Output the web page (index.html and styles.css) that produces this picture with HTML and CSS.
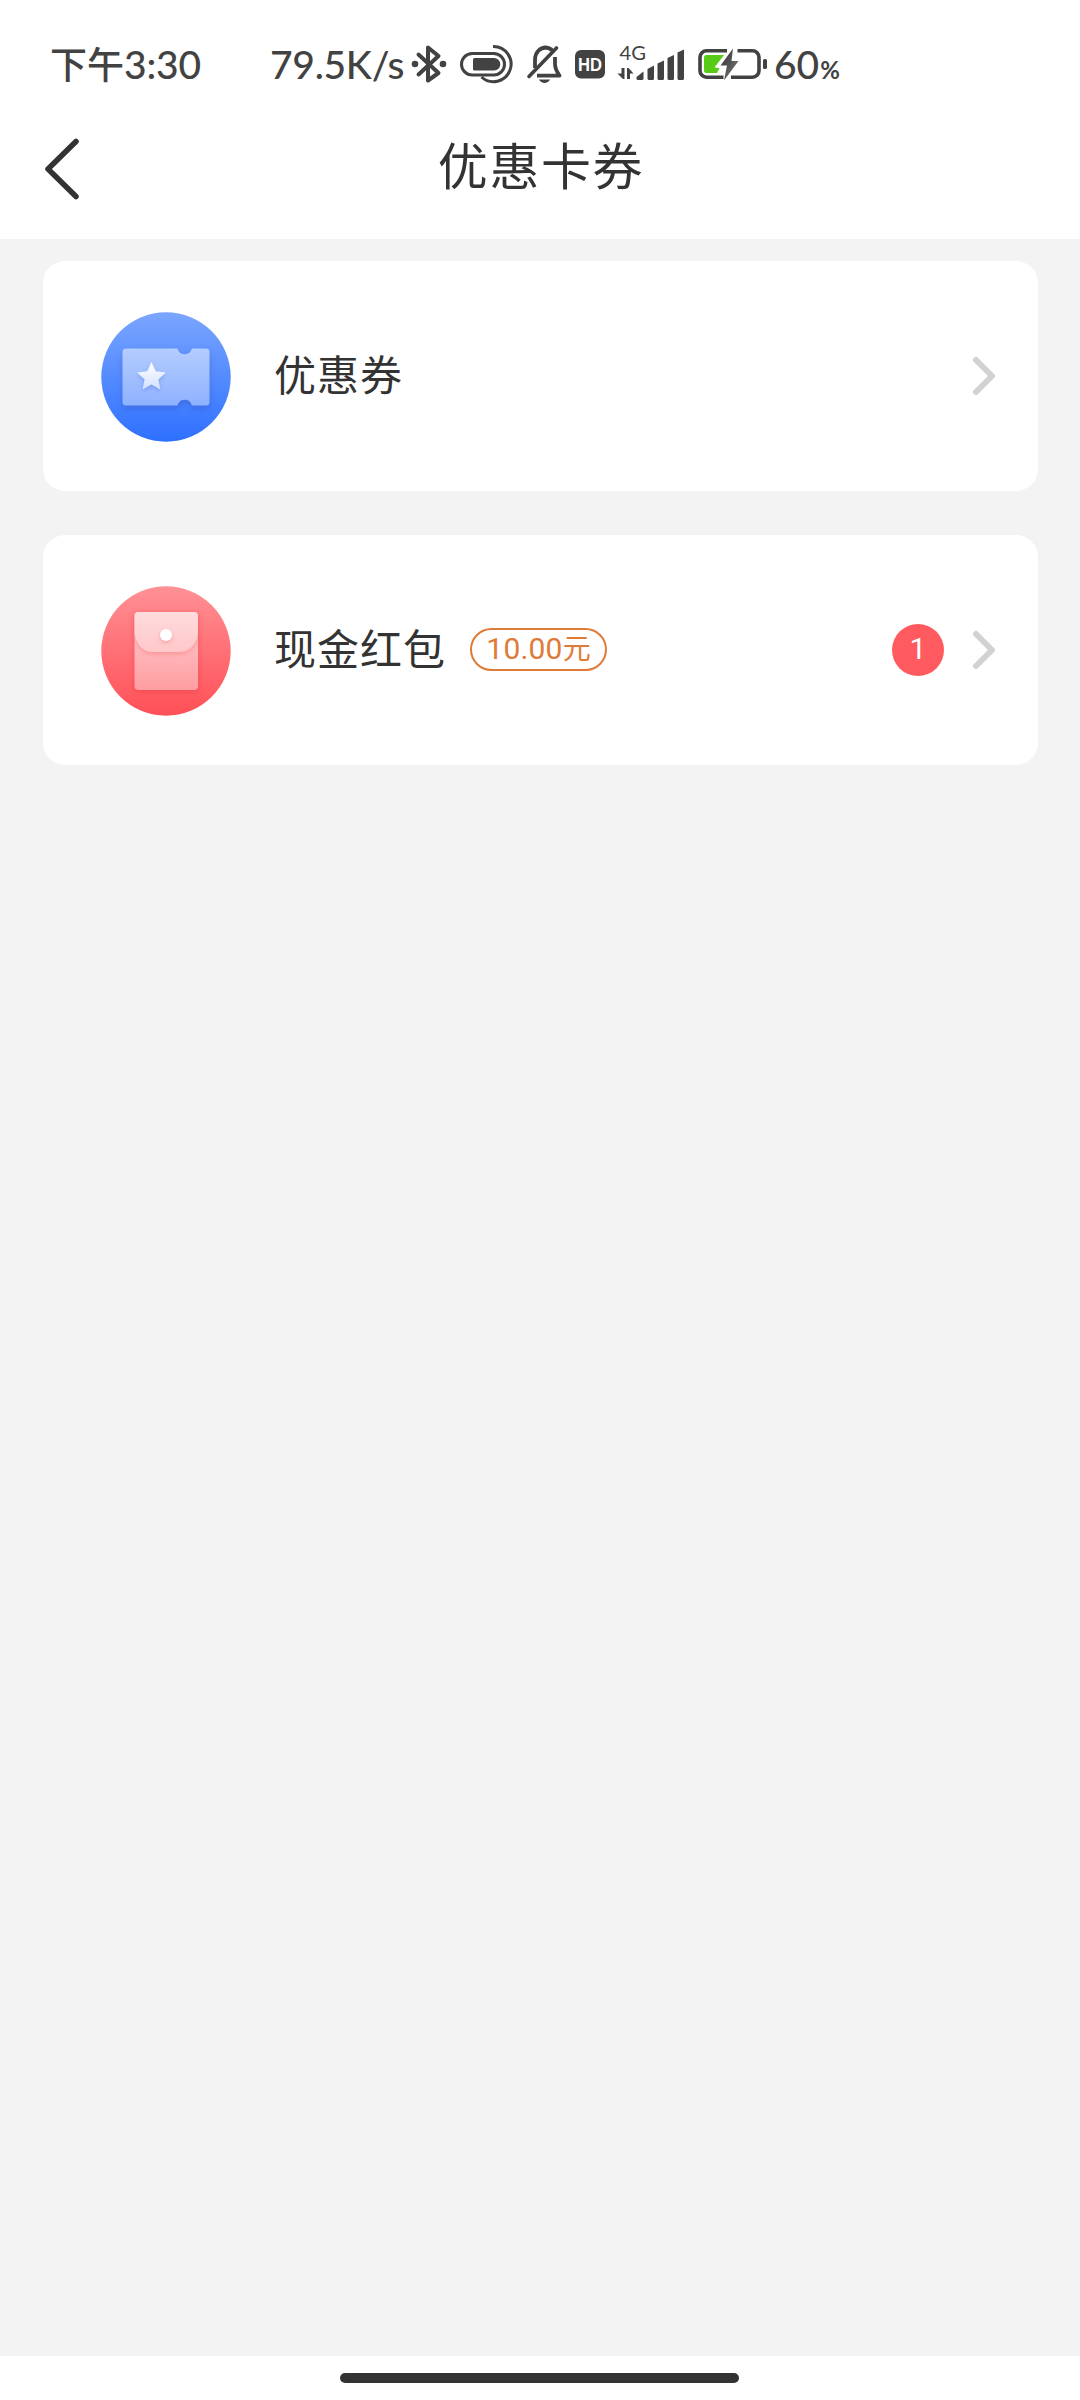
FILE: index.html
```html
<!DOCTYPE html>
<html lang="zh-CN">
<head>
<meta charset="utf-8">
<title>优惠卡券</title>
<link rel="stylesheet" href="styles.css">
</head>
<body>
<div class="screen">
  <header class="top">
    <div class="status">
      <span class="clock"><span class="clock-cn">下午</span>3:30</span>
      <span class="speed">79.5K/s</span>
      <svg width="40" height="68" viewBox="410 30 40 68">
        <path class="line" stroke-width="4" d="M418.500 54.500L438.500 73 428 80.500V47.500L438.500 56 418.500 74.500"/>
        <circle class="solid" cx="415" cy="64" r="3.300"/><circle class="solid" cx="443" cy="64" r="3.300"/>
      </svg>
      <svg width="70" height="68" viewBox="450 30 70 68">
        <rect class="line" stroke-width="3" x="461.500" y="53.500" width="43" height="21.500" rx="10.750"/>
        <path class="solid" d="M474.500 58H494a6 6 0 0 1 0 12.500H474.500a1.500 1.500 0 0 1-1.500-1.500V59.500a1.500 1.500 0 0 1 1.500-1.500z"/>
        <path class="line butt" stroke-width="3" d="M493 46.500a17.600 17.600 0 1 1-11.500 30.500"/>
      </svg>
      <svg width="50" height="68" viewBox="520 30 50 68">
        <path class="line butt" stroke-width="3.800" d="M535 68V60C535 52 540 48 545 47.500 549 47.500 551 49 553 51M555 57V64C555 69 556.500 71 559.500 75.700H537"/>
        <path class="line" stroke-width="3.600" d="M529 76.500L556.500 48"/>
        <path class="solid" d="M539 79.500H550C548 84 541 84 539 79.500z"/>
      </svg>
      <svg width="40" height="68" viewBox="570 30 40 68">
        <rect class="solid" x="575" y="50" width="30" height="28.500" rx="6"/>
        <text class="hd" x="578" y="70.500" textLength="24" lengthAdjust="spacingAndGlyphs">HD</text>
      </svg>
      <svg width="80" height="68" viewBox="610 30 80 68">
        <text class="net" x="619.500" y="60" textLength="26.500" lengthAdjust="spacingAndGlyphs">4G</text>
        <path class="solid" d="M621.500 68H624.500V79H623L617.500 73.500H621.500zM627 68H628.500L633.500 73.500H630V79H627z"/>
        <path class="solid" d="M636.500 77L643.500 71.500V78.500a1.500 1.500 0 0 1-1.500 1.500H638a1.500 1.500 0 0 1-1.500-1.500zM647.500 69L654 65.500V78.500a1.500 1.500 0 0 1-1.500 1.500H649a1.500 1.500 0 0 1-1.500-1.500zM657.500 63.500L664 60.500V78.500a1.500 1.500 0 0 1-1.500 1.500H659a1.500 1.500 0 0 1-1.500-1.500zM667.500 58L674 55V78.500a1.500 1.500 0 0 1-1.500 1.500H669a1.500 1.500 0 0 1-1.500-1.500zM677.500 52.500L684 49.500V78.500a1.500 1.500 0 0 1-1.500 1.500H679a1.500 1.500 0 0 1-1.500-1.500z"/>
      </svg>
      <svg width="84" height="68" viewBox="690 30 84 68">
        <defs><linearGradient id="bolt" x1="0" y1="0" x2="1" y2="1"><stop offset="0" stop-color="#333"/><stop offset=".5" stop-color="#555"/><stop offset="1" stop-color="#888"/></linearGradient></defs>
        <path class="line butt" stroke-width="3.600" d="M727 50.800H706.500a6.500 6.500 0 0 0-6.500 6.500V70.700a6.500 6.500 0 0 0 6.500 6.500H723.500M737.500 50.800H752.500a6.500 6.500 0 0 1 6.500 6.500V70.700a6.500 6.500 0 0 1-6.500 6.500H731"/>
        <rect class="solid" x="763" y="59" width="4" height="10" rx="1.500"/>
        <path fill="#58cb17" d="M706.500 55H724L714.500 67.500 719.500 68 717 73H706.500a2.500 2.500 0 0 1-2.500-2.500V57.500a2.500 2.500 0 0 1 2.500-2.500z"/>
        <path fill="url(#bolt)" d="M733 48.500L720.500 65.500H727L724 80.500 738.500 61H731.500z"/>
      </svg>
      <span class="level">60<span class="pct">%</span></span>
    </div>
    <nav class="nav">
      <svg class="back" width="50" height="70" viewBox="40 134 50 70"><path d="M76 141.500L48 169 76 196.500"/></svg>
      <h1 class="title">优惠卡券</h1>
    </nav>
  </header>
  <main class="list">
    <a class="card">
      <svg class="icon" width="130" height="130" viewBox="0 0 130 130">
        <defs>
          <linearGradient id="blue" x2="0" y2="1"><stop stop-color="#7ba6ff"/><stop offset="1" stop-color="#2e70ff"/></linearGradient>
          <linearGradient id="ticket" x2="0" y2="1"><stop stop-color="#b4cdff"/><stop offset="1" stop-color="#8fb2ff"/></linearGradient>
          <linearGradient id="star" x2="0" y2="1"><stop stop-color="#fff"/><stop offset="1" stop-color="#d3e0ff"/></linearGradient>
        </defs>
        <circle cx="65" cy="65" r="64.700" fill="url(#blue)"/>
        <path class="ticket" fill="url(#ticket)" d="M25 36.500H76.500a7.400 7.400 0 0 0 14.400 0H105a3.500 3.500 0 0 1 3.500 3.500V90a3.500 3.500 0 0 1-3.500 3.500H90.900a7.400 7.400 0 0 0-14.400 0H25a3.500 3.500 0 0 1-3.500-3.500V40a3.500 3.500 0 0 1 3.500-3.500z"/>
        <path class="star" fill="url(#star)" d="M50.500 50L54.800 59.300 64.800 60.600 57.400 67.400 59.400 77.600 50.500 72.600 41.600 77.600 43.600 67.400 36.200 60.600 46.200 59.300z"/>
      </svg>
      <span class="label">优惠券</span>
      <svg class="arrow" width="26" height="42" viewBox="0 0 26 42"><path d="M4 5L20 21 4 37"/></svg>
    </a>
    <a class="card">
      <svg class="icon" width="130" height="130" viewBox="0 0 130 130">
        <defs>
          <linearGradient id="red" x2="0" y2="1"><stop stop-color="#ff9195"/><stop offset="1" stop-color="#ff5057"/></linearGradient>
          <linearGradient id="packet" x2="0" y2="1"><stop stop-color="#ffd0d2"/><stop offset="1" stop-color="#ff9da1"/></linearGradient>
          <linearGradient id="flap" x2="0" y2="1"><stop stop-color="#ffdcdd"/><stop offset="1" stop-color="#ffc7c9"/></linearGradient>
        </defs>
        <circle cx="65" cy="65" r="64.700" fill="url(#red)"/>
        <rect class="packet" x="33.500" y="26" width="63.500" height="78" rx="4" fill="url(#packet)"/>
        <path class="flap" fill="url(#flap)" d="M37.500 26H93a4 4 0 0 1 4 4V48Q93 66 78 66H52Q37.500 66 33.500 48V30a4 4 0 0 1 4-4z"/>
        <circle class="flap" cx="65" cy="49" r="6" fill="#fff"/>
      </svg>
      <span class="label">现金红包</span>
      <span class="amount">10.00<span class="yuan">元</span></span>
      <span class="count">1</span>
      <svg class="arrow" width="26" height="42" viewBox="0 0 26 42"><path d="M4 5L20 21 4 37"/></svg>
    </a>
  </main>
  <footer class="gesture"><div class="handle"></div></footer>
</div>
</body>
</html>
```
FILE: styles.css
```css
* { box-sizing: border-box; }
body { margin: 0; background: #fff; font-family: "Noto Sans CJK SC", sans-serif; color: #333; }
.screen { width: 1080px; height: 2400px; display: flex; flex-direction: column; background: #f3f3f3; }
svg { display: block; flex: none; }

.top { height: 239px; background: #fff; }
.status { height: 98px; padding: 30px 0 0 50px; display: flex; font-family: Lato, "Noto Sans CJK SC", sans-serif; font-size: 39px; font-weight: 500; line-height: 68px; color: #424242; white-space: nowrap; }
.clock { width: 220px; letter-spacing: -0.2px; }
.clock-cn { font-size: 37px; letter-spacing: 0; }
.speed { width: 140px; letter-spacing: -0.3px; }
.pct { margin-left: 1px; font-size: 24px; font-weight: 700; }
.line { fill: none; stroke: #424242; stroke-linecap: round; stroke-linejoin: round; }
.butt { stroke-linecap: butt; }
.solid { fill: #424242; }
.hd { font: bold 17.5px "Liberation Sans", sans-serif; fill: #fff; }
.net { font: 20px Lato, sans-serif; fill: #424242; }

.nav { height: 141px; padding: 36px 40px 0; display: grid; grid-template-columns: 50px 1fr 50px; }
.back path { fill: none; stroke: #333; stroke-width: 5.5; stroke-linecap: round; stroke-linejoin: round; }
.title { margin: 0; padding-left: 2px; font-size: 50px; font-weight: 400; line-height: 58px; letter-spacing: 1.6px; text-align: center; }

.list { flex: 1; padding: 22px 42px 0 43px; display: flex; flex-direction: column; gap: 44px; }
.card { height: 230px; padding: 0 40px 0 58px; display: flex; align-items: center; background: #fff; border-radius: 22px; }
.icon { margin-top: 2px; }
.label { margin: 0 0 7px 43px; font-size: 42px; line-height: 60px; letter-spacing: 1px; }
.amount { width: 137px; height: 43px; margin: 0 0 2px 24px; border: 2px solid #e07b37; border-radius: 22px; color: #e07b37; font-family: Roboto, "Noto Sans CJK SC", sans-serif; font-size: 30px; line-height: 38px; text-align: center; letter-spacing: 0.2px; white-space: nowrap; }
.yuan { font-size: 28px; letter-spacing: 0; }
.count { width: 52px; height: 52px; margin-left: auto; border-radius: 50%; background: #ff5a60; color: #fff; font-family: Roboto, sans-serif; font-size: 30px; line-height: 50px; text-align: center; }
.arrow { margin-left: auto; }
.count + .arrow { margin-left: 28px; }
.arrow path { fill: none; stroke: #d2d2d2; stroke-width: 6; stroke-linecap: round; stroke-linejoin: round; }
.ticket { filter: drop-shadow(0 3px 3px rgba(40, 40, 120, .2)); }
.packet { filter: drop-shadow(0 2px 3px rgba(220, 40, 50, .35)); }
.star { filter: drop-shadow(0 2px 2px rgba(60, 100, 220, .35)); }
.flap { filter: drop-shadow(0 2px 2px rgba(240, 90, 95, .35)); }

.gesture { height: 44px; padding: 17px 0 0 340px; background: #fff; }
.handle { width: 399px; height: 10px; border-radius: 5px; background: #333; }
```
